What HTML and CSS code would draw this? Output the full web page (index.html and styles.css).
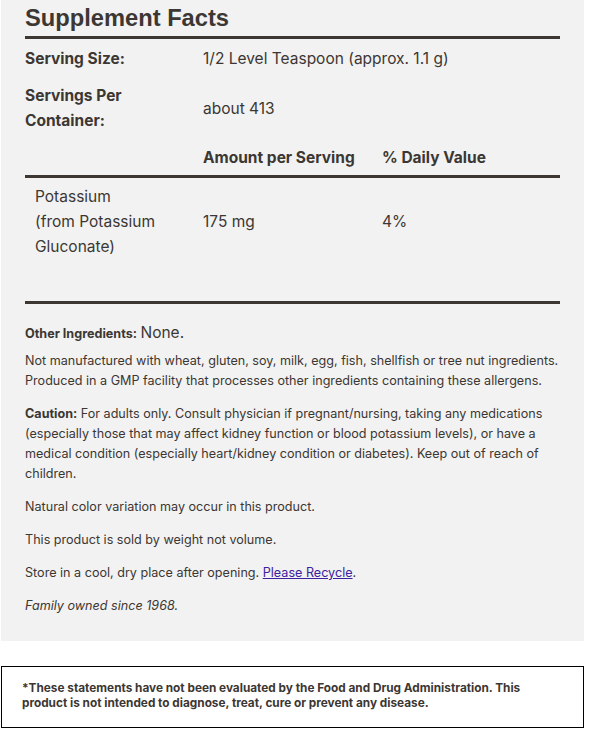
FILE: index.html
```html
<!DOCTYPE html>
<html lang="en">
<head>
<meta charset="utf-8">
<title>Supplement Facts</title>
<link rel="stylesheet" href="styles.css">
</head>
<body>
<div class="page">
  <section class="panel">
    <h1 class="title">Supplement Facts</h1>
    <div class="serving">
      <div class="cell label">Serving Size:</div>
      <div class="cell value wide">1/2 Level Teaspoon (approx. 1.1 g)</div>
      <div class="cell label">Servings Per<br>Container:</div>
      <div class="cell value wide mid">about 413</div>
      <div class="cell last"></div>
      <div class="cell last label">Amount per Serving</div>
      <div class="cell last label">% Daily Value</div>
    </div>
    <div class="nutrients">
      <div class="cell name">Potassium<br>(from Potassium Gluconate)</div>
      <div class="cell mid">175 mg</div>
      <div class="cell mid">4%</div>
    </div>
    <div class="notes">
      <p class="first"><b>Other Ingredients:</b> <span class="big">None.</span></p>
      <p>Not manufactured with wheat, gluten, soy, milk, egg, fish, shellfish or tree nut ingredients. Produced in a GMP facility that processes other ingredients containing these allergens.</p>
      <p><b>Caution:</b> For adults only. Consult physician if pregnant/nursing, taking any medications (especially those that may affect kidney function or blood potassium levels), or have a medical condition (especially heart/kidney condition or diabetes). Keep out of reach of children.</p>
      <p>Natural color variation may occur in this product.</p>
      <p>This product is sold by weight not volume.</p>
      <p>Store in a cool, dry place after opening. <a class="link" href="#">Please Recycle</a>.</p>
      <p class="italic">Family owned since 1968.</p>
    </div>
  </section>
  <div class="disclaimer">
    <p>*These statements have not been evaluated by the Food and Drug Administration. This product is not intended to diagnose, treat, cure or prevent any disease.</p>
  </div>
</div>
</body>
</html>
```
FILE: styles.css
```css
html, body {
  margin: 0;
  padding: 0;
  background: #ffffff;
}
body {
  font-family: Inter, "Noto Sans", sans-serif;
  color: #3c3733;
}
.page {
  width: 583px;
  margin-left: 1px;
}
.panel {
  background: #f2f2f2;
  padding: 0 24px 12px;
}
.title {
  margin: 0;
  padding: 3px 0 3px;
  font: 700 23.7px/30px "Liberation Sans", Arial, sans-serif;
  color: #3c3733;
  border-bottom: 3px solid #3c3733;
}
.serving {
  display: grid;
  grid-template-columns: 178px 179px 1fr;
  padding-top: 1px;
  border-bottom: 3px solid #3c3733;
  font-size: 15.5px;
  line-height: 25px;
}
.cell {
  padding: 6px 0;
}
.serving .wide {
  grid-column: span 2;
}
.serving .last {
  padding-bottom: 5px;
}
.label {
  font-weight: 700;
}
.mid {
  align-self: center;
}
.nutrients {
  display: grid;
  grid-template-columns: 178px 179px 1fr;
  padding: 6px 0 42px;
  border-bottom: 3px solid #3c3733;
  font-size: 15.5px;
  line-height: 25px;
}
.nutrients .cell {
  padding: 0;
}
.nutrients .name {
  padding-left: 10px;
}
.notes {
  padding-top: 19px;
  font-size: 12.6px;
  line-height: 20px;
}
.notes p {
  margin: 0 0 13px;
}
.notes p.first {
  margin-bottom: 7px;
}
.notes b {
  font-weight: 700;
}
.big {
  font-size: 15.5px;
}
.italic {
  font-style: italic;
}
.link {
  color: #3b22a0;
  text-decoration: underline;
}
.disclaimer {
  margin-top: 25px;
  border: 1px solid #000000;
  padding: 14px 20px 16px;
}
.disclaimer p {
  margin: 0;
  font-size: 11.8px;
  line-height: 15px;
  font-weight: 700;
  color: #3c3733;
}
```
